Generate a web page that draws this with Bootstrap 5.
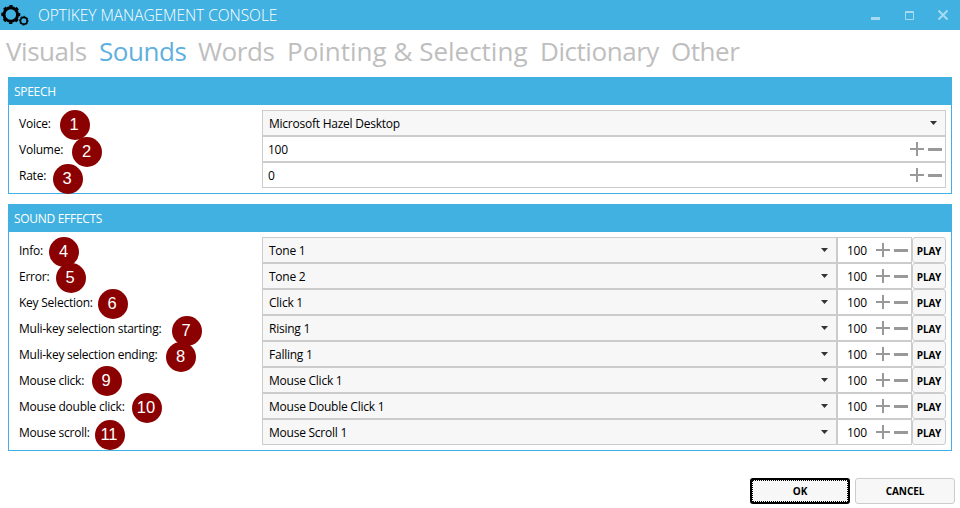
<!DOCTYPE html>
<html lang="en">
<head>
<meta charset="utf-8">
<title>OptiKey Management Console</title>
<link href="https://cdn.jsdelivr.net/npm/bootstrap@5.3.0/dist/css/bootstrap.min.css" rel="stylesheet">
<style>
body{font-family:"Open Sans","Noto Sans",sans-serif;font-size:12px;line-height:16px;color:#000;width:960px;height:508px;overflow:hidden;background:#fff}
.titlebar{height:30px;background:#41b1e1;color:#fff}
.titlebar .logo{margin-left:1px;width:28px;height:30px}
.apptitle{font-size:15.5px;margin-left:9px;font-weight:300;line-height:30px;letter-spacing:-.04px}
.tabs{height:47px;padding-left:6px;font-size:26px;line-height:43px;color:#bebebe;white-space:nowrap;letter-spacing:-.45px}
.tabs span{flex:none}
.tabs .on{color:#5fb0e0}
.w1{width:93px}.w2{width:99px}.w3{width:89px}.w4{width:253px;letter-spacing:0}.w5{width:131px}
.group{margin:0 8px 10px;border:1px solid #41b1e1;padding-bottom:5px}
.group header{height:27px;background:#41b1e1;color:#fff;line-height:27px;padding-left:5px;margin-bottom:5px;letter-spacing:-.3px}
.line{height:26px;padding:0 5px 0 10px;letter-spacing:-.24px}
.line label{width:243px;flex:none;padding-top:2px}
.combo,.num{height:26px;border:1px solid #ccc}
.combo span,.num span{padding-top:2px}
.combo{background:#f7f7f7;padding:0 8px 0 6px}
.num{padding:0 3px 0 5px}
.num.sm{width:75px;padding-left:9px;flex:none}
.pm{width:32px;height:14px;flex:none}
.play{width:34px;height:26px;flex:none;border:1px solid #ccc;border-radius:3px;background:#f7f7f7;font-size:10px;font-weight:700;padding:2px 0 0;color:#000;line-height:22px;letter-spacing:-.2px}
.actions{padding:27px 5px 0;gap:5px}
.act{width:100px;height:26px;border:1px solid #ccc;border-radius:3px;background:#f7f7f7;font-size:10px;font-weight:700;padding:0;line-height:23px;color:#000;letter-spacing:-.1px}
.act.def{border:2px solid #000;line-height:21px;position:relative}
.act.def::after{content:"";position:absolute;inset:0;border:1px dotted #000}
.pin{position:absolute;width:30px;height:30px;border-radius:50%;background:#8b0000;color:#fff;font:16.5px/29px "Liberation Sans",Arial,sans-serif;text-align:center;padding-right:1px}
</style>
<script src="https://cdn.jsdelivr.net/npm/bootstrap@5.3.0/dist/js/bootstrap.bundle.min.js"></script>
</head>
<body class="position-relative">
<svg class="d-none">
<symbol id="pm" viewBox="0 0 32 14"><path d="M0 6h14v2H0zM6 0h2v14H6z M18 6h14v3H18z" fill="#999"/></symbol>
<symbol id="dd" viewBox="0 0 7 4"><path d="M0 0h7L3.5 4z" fill="#333"/></symbol>
</svg>
<div class="titlebar d-flex">
<svg class="logo" viewBox="1 0 28 30" fill="none" stroke="#000"><circle cx="10.8" cy="14.5" r="6.8" stroke-width="3"/><circle cx="10.8" cy="14.5" r="8.6" stroke-width="1.8" stroke-dasharray="3.4 3.354" stroke-dashoffset="1.7"/><circle cx="23.8" cy="20.7" r="3.4" stroke-width="1.7"/><circle cx="23.8" cy="20.7" r="4.4" stroke-width="1" stroke-dasharray="1.75 1.706" stroke-dashoffset=".87"/></svg>
<div class="apptitle">OPTIKEY MANAGEMENT CONSOLE</div>
<svg class="ms-auto" width="96" height="30" viewBox="864 0 96 30" fill="none" stroke="#a5daf1"><path d="M871 18.5h9" stroke-width="3"/><path d="M905.5 11.5h8v8h-8zM905 12.5h9"/><path d="M938.5 10.5l9 9M947.5 10.5l-9 9" stroke-width="2"/></svg>
</div>
<nav class="tabs d-flex"><span class="w1">Visuals</span><span class="w2 on">Sounds</span><span class="w3">Words</span><span class="w4">Pointing &amp; Selecting</span><span class="w5">Dictionary</span><span>Other</span></nav>
<section class="group"><header>SPEECH</header>
<div class="line d-flex align-items-center"><label>Voice:</label><div class="combo flex-fill d-flex align-items-center justify-content-between"><span>Microsoft Hazel Desktop</span><svg width="7" height="4"><use href="#dd"/></svg></div></div>
<div class="line d-flex align-items-center"><label>Volume:</label><div class="num flex-fill d-flex align-items-center justify-content-between"><span>100</span><svg class="pm"><use href="#pm"/></svg></div></div>
<div class="line d-flex align-items-center"><label>Rate:</label><div class="num flex-fill d-flex align-items-center justify-content-between"><span>0</span><svg class="pm"><use href="#pm"/></svg></div></div>
</section>
<section class="group mb-0"><header>SOUND EFFECTS</header><div id="effects"></div></section>
<div class="actions d-flex justify-content-end"><button class="btn act def">OK</button><button class="btn act">CANCEL</button></div>
<div id="pins"></div>
<script>
const rows=[["Info:","Tone 1"],["Error:","Tone 2"],["Key Selection:","Click 1"],["Muli-key selection starting:","Rising 1"],["Muli-key selection ending:","Falling 1"],["Mouse click:","Mouse Click 1"],["Mouse double click:","Mouse Double Click 1"],["Mouse scroll:","Mouse Scroll 1"]];
document.getElementById("effects").innerHTML=rows.map(([l,v])=>`<div class="line d-flex align-items-center"><label>${l}</label><div class="combo flex-fill d-flex align-items-center justify-content-between"><span>${v}</span><svg width="7" height="4"><use href="#dd"/></svg></div><div class="num sm d-flex align-items-center justify-content-between"><span>100</span><svg class="pm"><use href="#pm"/></svg></div><button class="btn play">PLAY</button></div>`).join("");
const pins=[[74.5,124.5],[87,151.5],[67.5,178.5],[64,251.5],[70.5,278],[112.5,303.5],[186.5,330.5],[181,357],[106.5,380.5],[146.5,407.5],[109.5,434.5]];
document.getElementById("pins").innerHTML=pins.map(([x,y],i)=>`<div class="pin" style="left:${x-15}px;top:${y-15}px">${i+1}</div>`).join("");
</script>
</body>
</html>
